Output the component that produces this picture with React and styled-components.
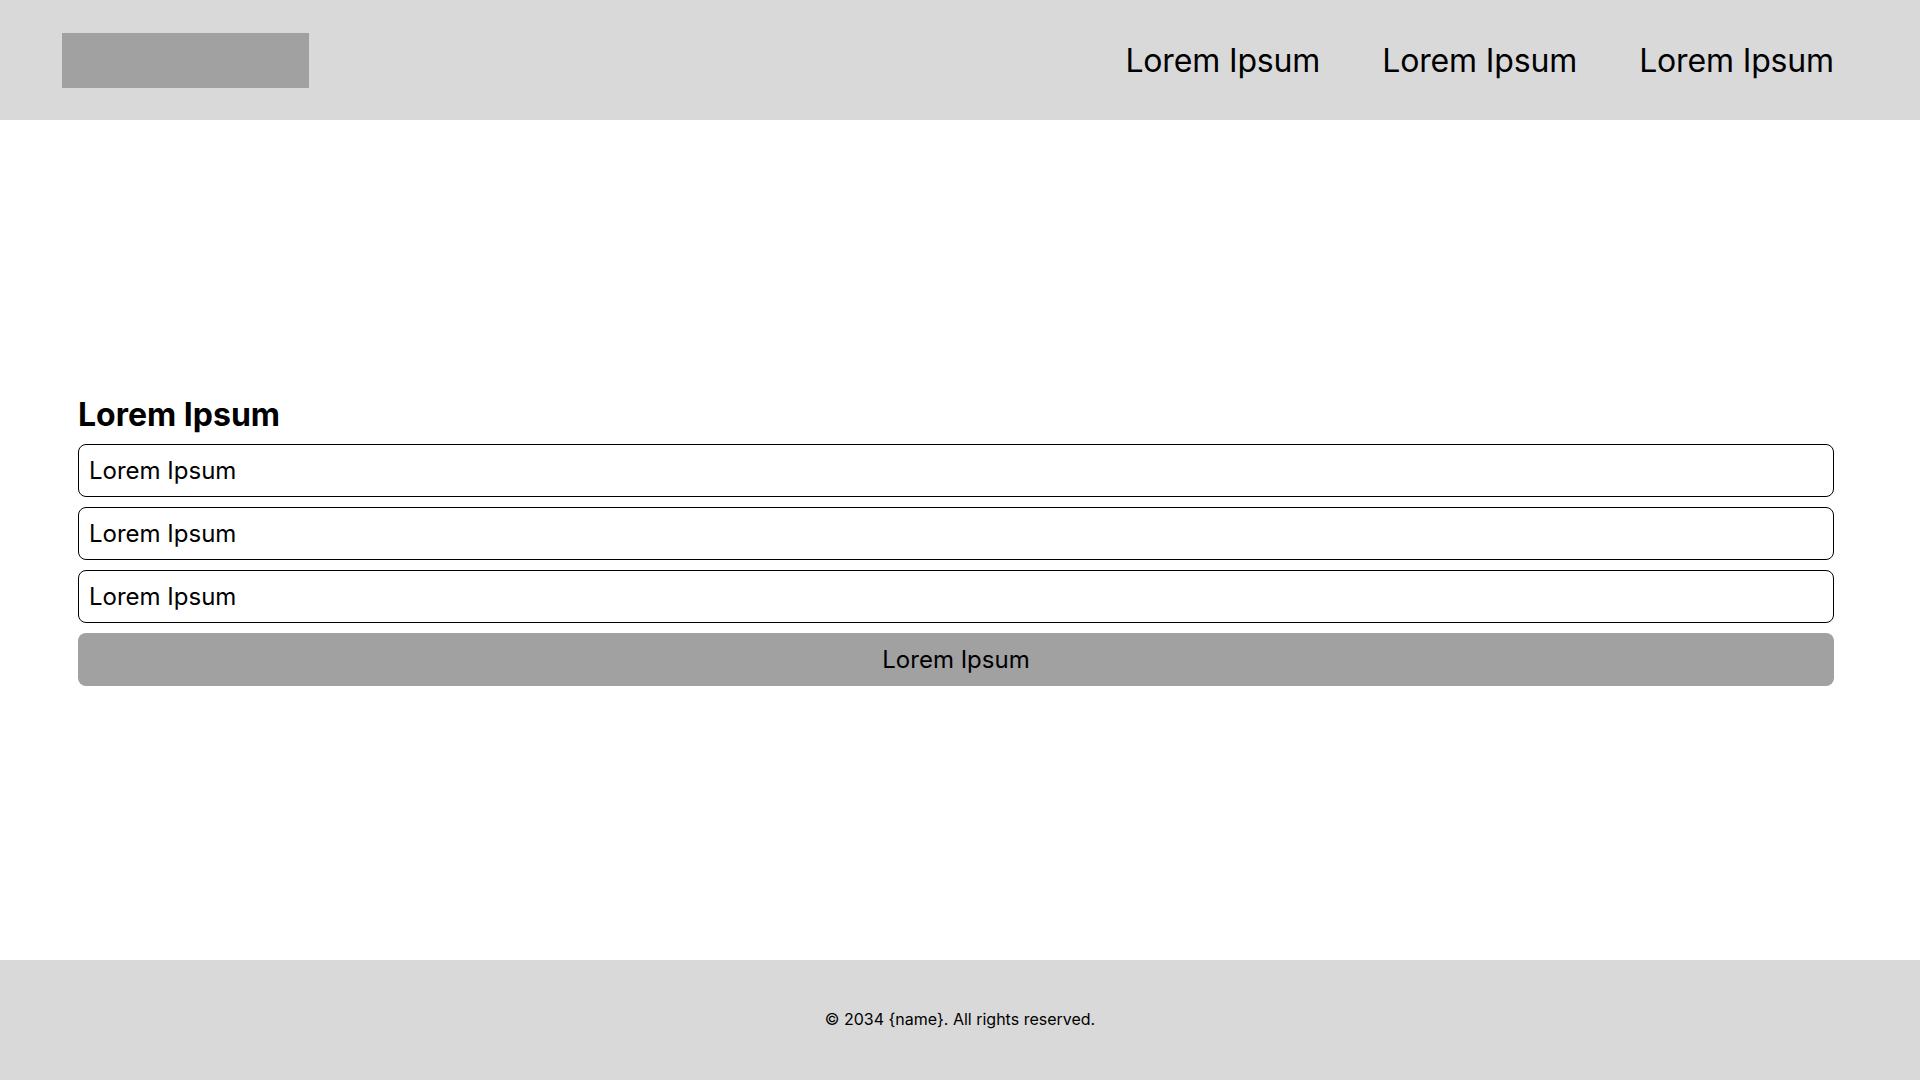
import React from 'react'
import styled, { createGlobalStyle } from 'styled-components';

const GlobalStyle = createGlobalStyle`
  * {
    box-sizing: border-box;
  }
  html, body {
    margin: 0;
    padding: 0;
    background: #ffffff;
    font-family: Inter, "Noto Sans", "Liberation Sans", sans-serif;
    color: #000000;
  }
`;

const Page = styled.div`
  display: flex;
  flex-direction: column;
  width: 100%;
  height: 1080px;
`;

const Header = styled.header`
  height: 120px;
  flex-shrink: 0;
  background: #d9d9d9;
  display: flex;
  align-items: center;
  justify-content: space-between;
  padding: 0 86px 0 62px;
`;

const Logo = styled.div`
  width: 247px;
  height: 55px;
  background: #a1a1a1;
`;

const Nav = styled.nav`
  display: flex;
  align-items: center;
  gap: 62px;
  padding-top: 2px;
`;

const NavLink = styled.a`
  font-size: 32px;
  line-height: 1;
  letter-spacing: -0.15px;
  color: #000000;
  text-decoration: none;
  cursor: pointer;
`;

const Main = styled.main`
  flex: 1;
  display: flex;
  flex-direction: column;
  justify-content: center;
  padding: 2px 86px 0 78px;
`;

const Form = styled.form`
  display: flex;
  flex-direction: column;
  gap: 10px;
  width: 100%;
`;

const Title = styled.h2`
  margin: 0 0 1px 0;
  font-size: 32px;
  font-weight: 700;
  line-height: 36px;
`;

const Field = styled.input`
  height: 53px;
  width: 100%;
  padding: 0 10px;
  border: 1.5px solid #000000;
  border-radius: 8px;
  background: #ffffff;
  font-family: inherit;
  font-size: 24px;
  color: #000000;
  outline: none;

  &::placeholder {
    color: #000000;
    opacity: 1;
  }
`;

const Submit = styled.button`
  height: 53px;
  width: 100%;
  border: none;
  border-radius: 8px;
  background: #a1a1a1;
  font-family: inherit;
  font-size: 24px;
  color: #000000;
  cursor: pointer;
`;

const Footer = styled.footer`
  height: 120px;
  flex-shrink: 0;
  background: #d9d9d9;
  display: flex;
  align-items: center;
  justify-content: center;
  font-size: 16px;
  padding-bottom: 2px;
`;

export default function App() {
  const links = ['Lorem Ipsum', 'Lorem Ipsum', 'Lorem Ipsum'];
  const fields = ['Lorem Ipsum', 'Lorem Ipsum', 'Lorem Ipsum'];

  return (
    <>
      <GlobalStyle />
      <Page>
        <Header>
          <Logo />
          <Nav>
            {links.map((label, i) => (
              <NavLink key={i}>{label}</NavLink>
            ))}
          </Nav>
        </Header>
        <Main>
          <Form onSubmit={e => e.preventDefault()}>
            <Title>Lorem Ipsum</Title>
            {fields.map((label, i) => (
              <Field key={i} placeholder={label} />
            ))}
            <Submit type="submit">Lorem Ipsum</Submit>
          </Form>
        </Main>
        <Footer>© 2034 {'{name}'}. All rights reserved.</Footer>
      </Page>
    </>
  )
}
